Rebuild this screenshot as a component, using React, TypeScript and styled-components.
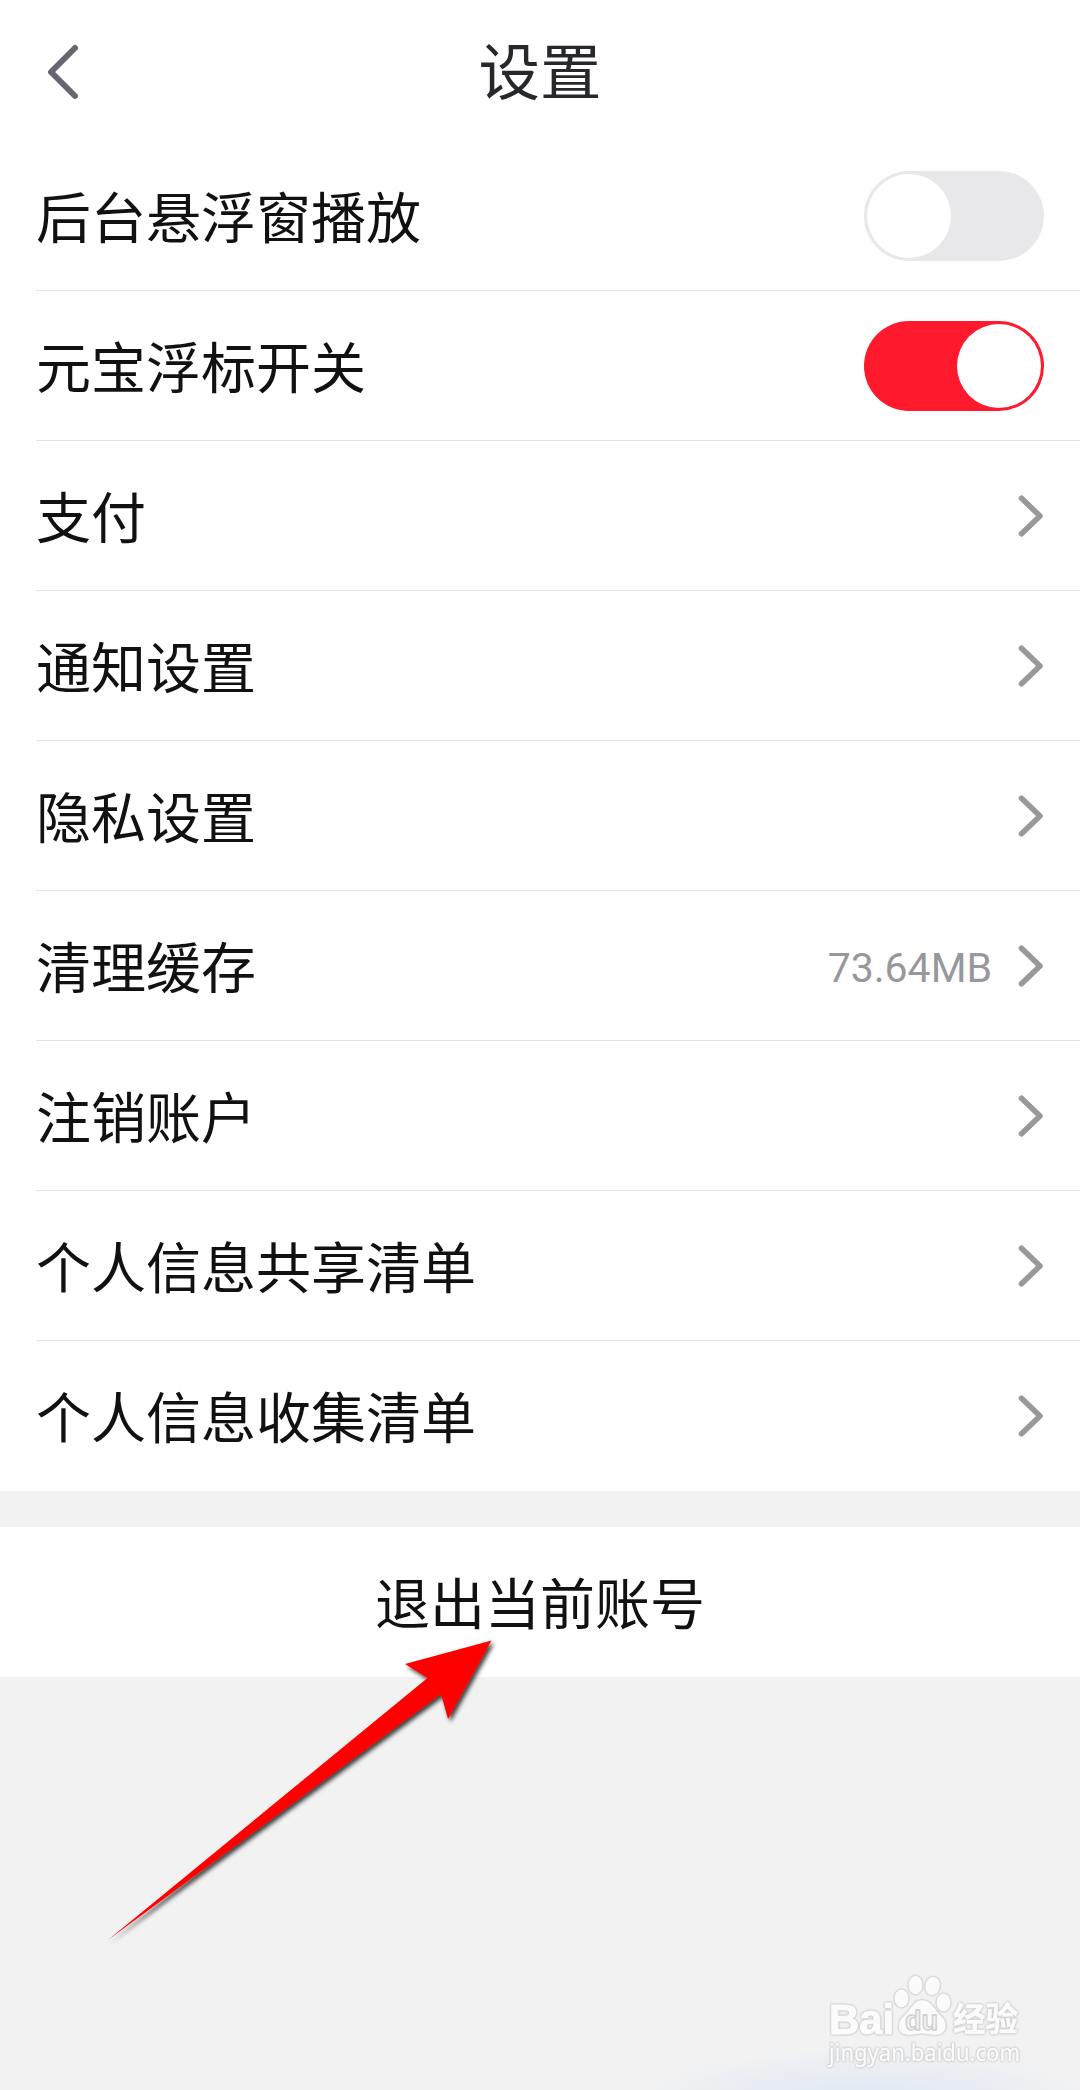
import React from 'react';
import styled, { createGlobalStyle } from 'styled-components';

const GlobalStyle = createGlobalStyle`
  body {
    margin: 0;
    background: #f2f2f2;
    font-family: Roboto, 'Noto Sans CJK SC', sans-serif;
  }
`;

const Screen = styled.main`
  position: relative;
  display: flex;
  flex-direction: column;
  width: 1080px;
  height: 2090px;
  overflow: hidden;
  background: #f2f2f2;
`;

const Header = styled.header`
  display: grid;
  grid-template-columns: 120px 1fr 120px;
  align-items: center;
  height: 141px;
  background: #fff;
`;

const BackButton = styled.button`
  display: flex;
  margin: 3px 0 0 45px;
  padding: 0;
  width: 36px;
  border: 0;
  background: none;
`;

const Title = styled.h1`
  margin: 0 0 3px;
  font-family: 'Noto Sans CJK SC', sans-serif;
  font-size: 61.5px;
  line-height: 90px;
  font-weight: 400;
  text-align: center;
  color: #27282c;
`;

const List = styled.section`
  display: flex;
  flex-direction: column;
  padding-left: 36px;
  background: #fff;
`;

const Row = styled.div`
  box-sizing: border-box;
  display: flex;
  align-items: center;
  height: 150px;
  padding-right: 36px;
  border-bottom: 1px solid #e3e3e4;

  &:last-child {
    border-bottom-color: transparent;
  }
`;

const Label = styled.span`
  flex: 1;
  font-family: 'Noto Sans CJK SC', sans-serif;
  font-size: 55px;
  line-height: 80px;
  margin-bottom: 4px;
  color: #111;
`;

const Value = styled.span`
  font-size: 41px;
  line-height: 50px;
  margin: 4px 25px 0 0;
  color: #98989c;
`;

const Track = styled.div<{ $on: boolean }>`
  box-sizing: border-box;
  display: flex;
  justify-content: ${(p) => (p.$on ? 'flex-end' : 'flex-start')};
  width: 180px;
  height: 90px;
  padding: 3px;
  border-radius: 45px;
  background: ${(p) => (p.$on ? '#ff192d' : '#e8e8ea')};
`;

const Knob = styled.div`
  width: 84px;
  height: 84px;
  border-radius: 50%;
  background: #fff;
`;

const Logout = styled.button`
  display: flex;
  align-items: center;
  justify-content: center;
  height: 150px;
  margin: 36px 0 0;
  padding: 0 0 5px;
  box-sizing: border-box;
  border: 0;
  background: #fff;
  font-family: 'Noto Sans CJK SC', sans-serif;
  font-size: 55px;
  line-height: 80px;
  color: #111;
`;

const Pointer = styled.svg`
  position: absolute;
  left: 90px;
  top: 1620px;
`;

const Glow = styled.div`
  position: absolute;
  left: 630px;
  top: 2048px;
  width: 470px;
  height: 100px;
  background: radial-gradient(ellipse closest-side, #dde7f5 0%, #e2eaf4 20%, rgba(242, 242, 242, 0) 100%);
`;

const Watermark = styled.svg`
  position: absolute;
  left: 820px;
  top: 1965px;
`;

const OutlinedGroup = styled.g`
  filter: drop-shadow(0 0 1px #bdbdbd) drop-shadow(0 0 0.6px #cfcfcf);
`;

const Chevron = () => (
  <svg width="27" height="44" viewBox="0 0 27 44" fill="none">
    <path d="M4.5 4.3 23 22 4.5 39.7" stroke="#999" strokeWidth="5.6" strokeLinecap="round" strokeLinejoin="round" />
  </svg>
);

type Item = { label: string; toggle?: boolean; value?: string };

const items: Item[] = [
  { label: '后台悬浮窗播放', toggle: false },
  { label: '元宝浮标开关', toggle: true },
  { label: '支付' },
  { label: '通知设置' },
  { label: '隐私设置' },
  { label: '清理缓存', value: '73.64MB' },
  { label: '注销账户' },
  { label: '个人信息共享清单' },
  { label: '个人信息收集清单' },
];

export default function App() {
  return (
    <Screen>
      <GlobalStyle />
      <Header>
        <BackButton aria-label="返回">
          <svg width="36" height="58" viewBox="0 0 36 58" fill="none">
            <path d="M30 5 6 29 30 53" stroke="#67666e" strokeWidth="6" strokeLinecap="round" strokeLinejoin="round" />
          </svg>
        </BackButton>
        <Title>设置</Title>
      </Header>
      <List>
        {items.map((item) => (
          <Row key={item.label}>
            <Label>{item.label}</Label>
            {item.value && <Value>{item.value}</Value>}
            {item.toggle === undefined ? (
              <Chevron />
            ) : (
              <Track $on={item.toggle} role="switch" aria-checked={item.toggle}>
                <Knob />
              </Track>
            )}
          </Row>
        ))}
      </List>
      <Logout>退出当前账号</Logout>
      <Glow />
      <Pointer width="430" height="340" viewBox="0 0 430 340">
        <defs>
          <filter id="drop" x="-10%" y="-10%" width="120%" height="120%">
            <feDropShadow dx="2.5" dy="3" stdDeviation="2.3" floodColor="#000" floodOpacity="0.75" />
          </filter>
        </defs>
        <path d="M18 320 337.5 58 315 44 401.5 20.5 358 99 351 74Z" fill="#f00" filter="url(#drop)" />
      </Pointer>
      <Watermark width="210" height="110" viewBox="820 1965 210 110">
        <OutlinedGroup fill="#fbfbfb" stroke="#fbfbfb" strokeLinejoin="round">
          <text x="829" y="2033.5" fontFamily="'Liberation Sans', sans-serif" fontWeight="700" fontSize="43" strokeWidth="1.2" textLength="65" lengthAdjust="spacingAndGlyphs">Bai</text>
          <g stroke="none">
            <ellipse cx="901.5" cy="1998.5" rx="7" ry="9" />
            <ellipse cx="915.5" cy="1985" rx="7" ry="9.3" />
            <ellipse cx="932.5" cy="1986" rx="7.3" ry="9.3" transform="rotate(12 932.5 1986)" />
            <ellipse cx="943.5" cy="2002.5" rx="7" ry="9" />
            <path d="M922 2000C914 2000 911 2009 904 2016C896 2023 897 2035 909 2035C914 2035 917 2033.500 922 2033.500S930 2035 935 2035C947 2035 949 2023 941 2016C934 2009 931 2000 922 2000Z" />
          </g>
          <text x="953" y="2031" fontFamily="'Noto Sans CJK SC', sans-serif" fontWeight="700" fontSize="32.500" strokeWidth="0.6">经验</text>
          <text x="829" y="2060.5" fontFamily="'Noto Sans', sans-serif" fontSize="23" strokeWidth="0.3" textLength="191" lengthAdjust="spacingAndGlyphs">jingyan.baidu.com</text>
        </OutlinedGroup>
        <text x="905" y="2030" fontFamily="'Liberation Sans', sans-serif" fontWeight="700" fontSize="27" fill="#f1f1f1" stroke="#cfcfcf" strokeWidth="1.3" textLength="33" lengthAdjust="spacingAndGlyphs">du</text>
      </Watermark>
    </Screen>
  );
}
